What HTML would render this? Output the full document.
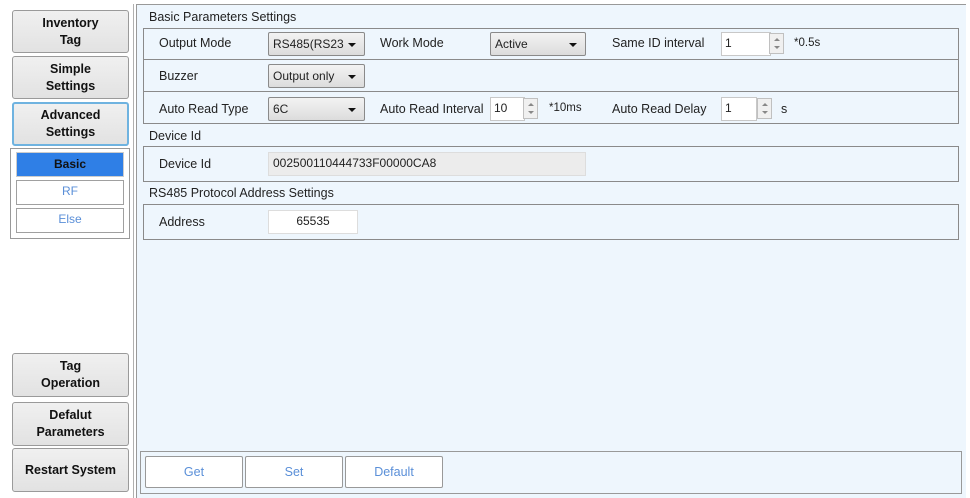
<!DOCTYPE html>
<html><head><style>
body{margin:0;width:970px;height:498px;background:#fff;position:relative;overflow:hidden;font-family:"Liberation Sans",sans-serif;font-size:12px;color:#222}
.a{position:absolute;box-sizing:border-box}
.nb{background:linear-gradient(#f0f0f0,#e2e2e2);border:1px solid #9a9a9a;border-radius:3px;font-weight:bold;font-size:12.5px;text-align:center;display:flex;align-items:center;justify-content:center;line-height:17px;color:#111}
.sb{background:#fff;border:1px solid #a0a0a0;text-align:center;color:#5a8fd8;font-size:12px;line-height:21px}
.box{border:1px solid #8a8a8a;background:#eef6fd}
.lbl{font-size:12.5px;color:#222;white-space:nowrap}
.cb{background:linear-gradient(#f3f3f3,#dcdcdc);border:1px solid #8a8a8a;border-radius:2px;padding-left:4px;padding-right:20px;line-height:22px;font-size:12px;white-space:nowrap}
.cb span{display:block;overflow:hidden}
.cb:after{content:"";position:absolute;right:8px;top:10px;border:4px solid transparent;border-top:4px solid #111;border-bottom:0}
.tb{background:#fff;border:1px solid #c8c8c8;padding-left:3px;line-height:21px;font-size:12px}
.sp{background:#f0f0f0;border:1px solid #c0c0c0}
.sp:before{content:"";position:absolute;left:4px;top:4px;border:3px solid transparent;border-bottom:3px solid #888;border-top:0}
.sp:after{content:"";position:absolute;left:4px;bottom:4px;border:3px solid transparent;border-top:3px solid #888;border-bottom:0}
.bt{background:#fff;border:1px solid #999;border-radius:2px;color:#5a8fd8;text-align:center;line-height:30px;font-size:12.5px}
</style></head><body>
<div class="a" style="left:133px;top:4px;width:1px;height:494px;background:#b0b0b0"></div>
<div class="a" style="left:136px;top:4px;width:830px;height:494px;background:#eef6fd;border-left:1px solid #999;border-top:1px solid #999"></div>

<div class="a nb" style="left:12px;top:10px;width:117px;height:43px">Inventory<br>Tag</div>
<div class="a nb" style="left:12px;top:56px;width:117px;height:43px">Simple<br>Settings</div>
<div class="a nb" style="left:12px;top:102px;width:117px;height:44px;border:2px solid #6fb3e0">Advanced<br>Settings</div>
<div class="a" style="left:10px;top:148px;width:120px;height:91px;border:1px solid #999"></div>
<div class="a sb" style="left:16px;top:152px;width:108px;height:25px;background:#2f7fe6;color:#111;font-weight:bold;line-height:23px;border-color:#ccc">Basic</div>
<div class="a sb" style="left:16px;top:180px;width:108px;height:25px">RF</div>
<div class="a sb" style="left:16px;top:208px;width:108px;height:25px">Else</div>
<div class="a nb" style="left:12px;top:353px;width:117px;height:44px">Tag<br>Operation</div>
<div class="a nb" style="left:12px;top:402px;width:117px;height:44px">Defalut<br>Parameters</div>
<div class="a nb" style="left:12px;top:448px;width:117px;height:44px">Restart System</div>

<div class="a lbl" style="left:149px;top:10px">Basic Parameters Settings</div>
<div class="a box" style="left:143px;top:28px;width:816px;height:32px"></div>
<div class="a box" style="left:143px;top:59px;width:816px;height:33px"></div>
<div class="a box" style="left:143px;top:91px;width:816px;height:33px"></div>
<div class="a lbl" style="left:159px;top:36px">Output Mode</div>
<div class="a cb" style="left:268px;top:32px;width:97px;height:24px"><span>RS485(RS232</span></div>
<div class="a lbl" style="left:380px;top:36px">Work Mode</div>
<div class="a cb" style="left:490px;top:32px;width:96px;height:24px"><span>Active</span></div>
<div class="a lbl" style="left:612px;top:36px">Same ID interval</div>
<div class="a tb" style="left:721px;top:32px;width:50px;height:24px">1</div>
<div class="a sp" style="left:769px;top:33px;width:15px;height:21px"></div>
<div class="a lbl" style="left:794px;top:37px;font-size:11.5px">*0.5s</div>
<div class="a lbl" style="left:159px;top:69px">Buzzer</div>
<div class="a cb" style="left:268px;top:64px;width:97px;height:24px"><span>Output only</span></div>
<div class="a lbl" style="left:159px;top:102px">Auto Read Type</div>
<div class="a cb" style="left:268px;top:97px;width:97px;height:24px"><span>6C</span></div>
<div class="a lbl" style="left:380px;top:102px">Auto Read Interval</div>
<div class="a tb" style="left:490px;top:97px;width:35px;height:24px">10</div>
<div class="a sp" style="left:523px;top:98px;width:15px;height:21px"></div>
<div class="a lbl" style="left:549px;top:102px;font-size:11.5px">*10ms</div>
<div class="a lbl" style="left:612px;top:102px">Auto Read Delay</div>
<div class="a tb" style="left:721px;top:97px;width:36px;height:24px">1</div>
<div class="a sp" style="left:757px;top:98px;width:15px;height:21px"></div>
<div class="a lbl" style="left:781px;top:102px">s</div>

<div class="a lbl" style="left:149px;top:129px">Device Id</div>
<div class="a box" style="left:143px;top:146px;width:816px;height:36px"></div>
<div class="a lbl" style="left:159px;top:157px">Device Id</div>
<div class="a tb" style="left:268px;top:152px;width:318px;height:24px;background:#ececec;border-color:#ddd;padding-left:4px">002500110444733F00000CA8</div>

<div class="a lbl" style="left:149px;top:186px">RS485 Protocol Address Settings</div>
<div class="a box" style="left:143px;top:204px;width:816px;height:36px"></div>
<div class="a lbl" style="left:159px;top:215px">Address</div>
<div class="a tb" style="left:268px;top:210px;width:90px;height:24px;text-align:center;padding:0;border-color:#ddd">65535</div>

<div class="a box" style="left:140px;top:451px;width:822px;height:43px;border-color:#999"></div>
<div class="a bt" style="left:145px;top:456px;width:98px;height:32px">Get</div>
<div class="a bt" style="left:245px;top:456px;width:98px;height:32px">Set</div>
<div class="a bt" style="left:345px;top:456px;width:98px;height:32px">Default</div>
</body></html>
